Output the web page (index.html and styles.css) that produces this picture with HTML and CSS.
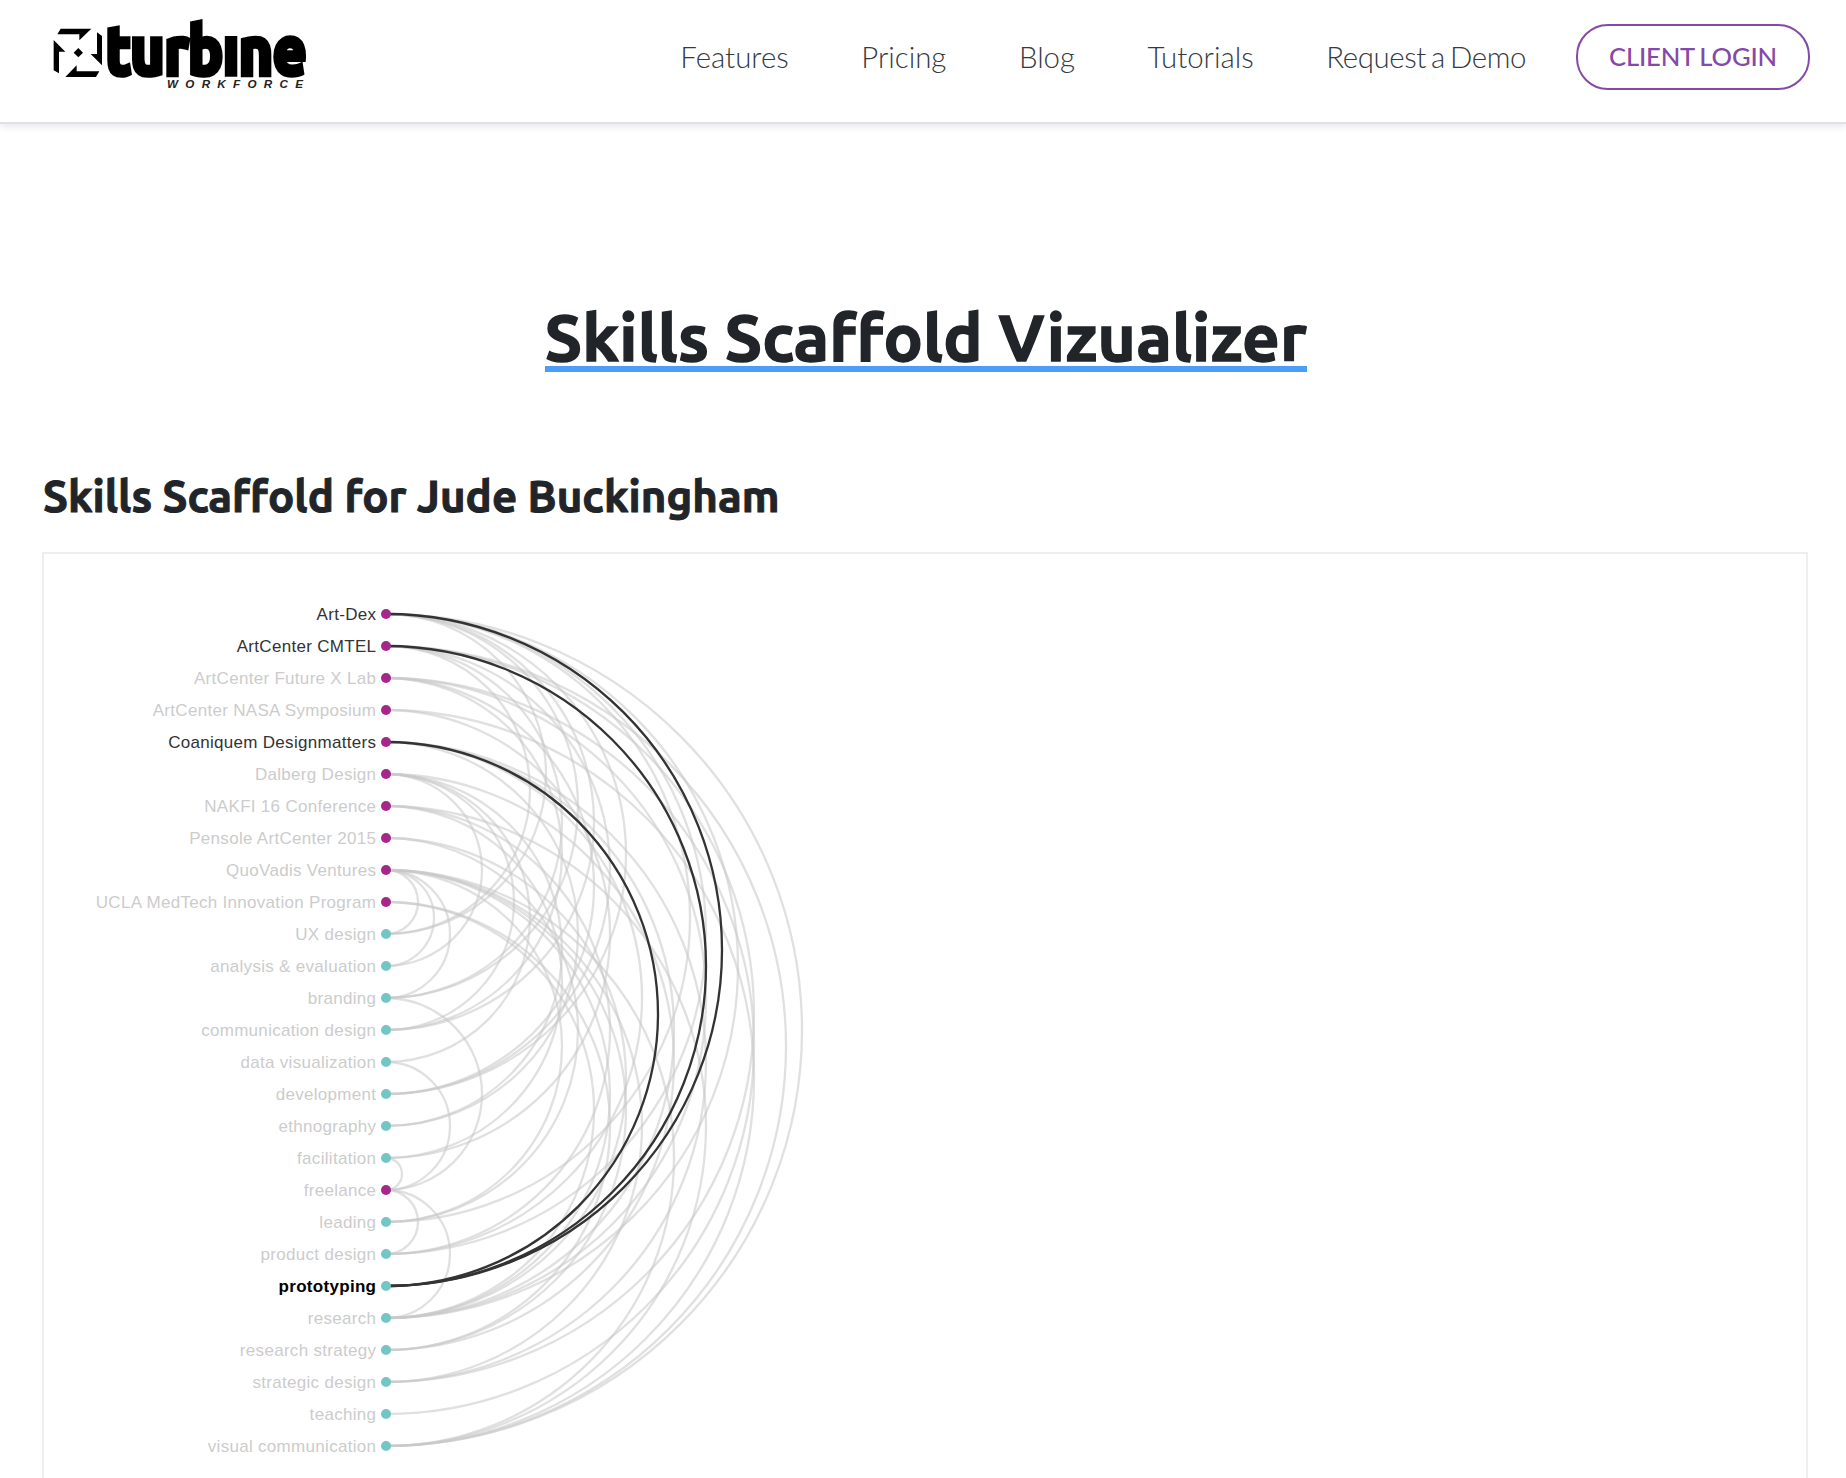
FILE: index.html
```html
<!DOCTYPE html>
<html lang="en">
<head>
<meta charset="utf-8">
<title>Skills Scaffold Vizualizer</title>
<link rel="stylesheet" href="styles.css">
</head>
<body>
<header class="topbar">
  <a class="brand" aria-label="Turbine Workforce">
    <svg class="brand-logo" viewBox="0 0 840 300">
      <path d="M62 86H154L118 121V103H52ZM171 97L186 108V196L152 162H171ZM178 214L168 231H76L110 196V214ZM41 120L76 155H57V220L41 211ZM115 144L129 158L115 172L101 158Z"/>
      <text class="brand-name" x="197" y="222" textLength="602" lengthAdjust="spacingAndGlyphs">turbıne</text>
      <text class="brand-sub" x="381" y="265" textLength="408">WORKFORCE</text>
    </svg>
  </a>
  <nav class="nav">
    <a class="nav-link">Features</a>
    <a class="nav-link">Pricing</a>
    <a class="nav-link">Blog</a>
    <a class="nav-link">Tutorials</a>
    <a class="nav-link">Request a Demo</a>
    <a class="login">CLIENT LOGIN</a>
  </nav>
</header>
<main class="page">
  <h1 class="title"><span class="title-text">Skills Scaffold Vizualizer</span></h1>
  <h2 class="subtitle">Skills Scaffold for Jude Buckingham</h2>
  <section class="chart-box">
    <svg class="chart" id="chart" width="800" height="924" viewBox="0 0 800 924"></svg>
  </section>
</main>
<script src="chart.js"></script>
</body>
</html>
```
FILE: styles.css
```css
* { box-sizing: border-box; }
body {
  margin: 0;
  background: #fff;
  color: #212529;
  font-family: Lato, sans-serif;
}
.topbar {
  height: 124px;
  display: flex;
  justify-content: space-between;
  align-items: flex-start;
  padding: 0 36px 0 40px;
  border-bottom: 2px solid #dee2e6;
  box-shadow: 0 2px 8px rgba(0, 0, 0, .11);
}
.brand-logo { display: block; width: 280px; height: 100px; overflow: visible; }
.brand-name { font: 700 199px Ubuntu, "Noto Sans", sans-serif; stroke: #000; stroke-width: 17; }
.brand-sub { font: italic bold 35px "Liberation Sans", sans-serif; fill: #222; }
.nav { display: flex; align-items: center; padding-top: 24px; }
.nav-link {
  margin-right: 72.5px;
  font-size: 29.4px;
  font-weight: 300;
  line-height: 66px;
  color: #343a40;
  white-space: nowrap;
}
.nav-link:nth-child(5) { margin-right: 50px; letter-spacing: -.4px; word-spacing: -2.4px; }
.login {
  width: 234px;
  height: 66px;
  border: 2px solid #8549a8;
  border-radius: 32px;
  color: #8549a8;
  font-size: 25.6px;
  font-weight: 500;
  line-height: 61px;
  letter-spacing: -.15px;
  word-spacing: -1.4px;
  text-align: center;
  white-space: nowrap;
}
.page { padding: 176px 38px 0 42px; font-family: Ubuntu, "Noto Sans", sans-serif; }
.title {
  margin: 0;
  height: 158px;
  padding-left: 2px;
  text-align: center;
  font-size: 65.6px;
  line-height: 74px;
  font-weight: 700;
}
.title-text {
  display: inline-block;
  height: 72px;
  border-bottom: 6px solid #4a9df8;
  letter-spacing: .22px;
  white-space: nowrap;
  -webkit-text-stroke: 1.4px #212529;
}
.subtitle {
  margin: 0;
  height: 94px;
  padding-left: 1px;
  font-size: 43.8px;
  line-height: 76px;
  font-weight: 700;
  letter-spacing: .05px;
  -webkit-text-stroke: 1px #212529;
}
.chart-box { height: 926px; border: 2px solid #eee; border-bottom: 0; }
.chart { display: block; }
.link { fill: none; stroke: #c8c8c8; stroke-opacity: .56; stroke-width: 2.3; }
.link.active { stroke: #333; stroke-opacity: 1; }
.dot { fill: #73c5c7; }
.dot.project { fill: #a3278d; }
.label { font: 17px Helvetica, "Liberation Sans", sans-serif; letter-spacing: .3px; fill: #ccc; text-anchor: end; }
.label.linked { fill: #333; }
.label.selected { fill: #000; font-weight: bold; }
```
FILE: chart.js
```js
const names = ["Art-Dex", "ArtCenter CMTEL", "ArtCenter Future X Lab", "ArtCenter NASA Symposium",
  "Coaniquem Designmatters", "Dalberg Design", "NAKFI 16 Conference", "Pensole ArtCenter 2015",
  "QuoVadis Ventures", "UCLA MedTech Innovation Program", "UX design", "analysis & evaluation",
  "branding", "communication design", "data visualization", "development", "ethnography",
  "facilitation", "freelance", "leading", "product design", "prototyping", "research",
  "research strategy", "strategic design", "teaching", "visual communication"];
const skills = {
  0: [10, 12, 13, 15, 19, 20, 21, 22, 26],
  1: [10, 12, 15, 21, 24, 26],
  2: [13, 15, 22, 25],
  3: [17, 26],
  4: [16, 20, 21, 22, 24],
  5: [11, 13, 14, 16, 23],
  6: [17, 20, 26],
  7: [19, 22],
  8: [10, 11, 12, 19, 22, 23, 24, 26],
  9: [22, 23],
  18: [12, 14, 17, 20, 22]
};
const X = 342, TOP = 60, STEP = 32, SELECTED = 21;
const svg = document.getElementById("chart");
function add(tag, attrs, text) {
  const el = document.createElementNS("http://www.w3.org/2000/svg", tag);
  for (const k in attrs) el.setAttribute(k, attrs[k]);
  if (text) el.textContent = text;
  svg.appendChild(el);
}
const y = i => TOP + STEP * i;
const links = [];
for (const p in skills) for (const s of skills[p]) links.push([Math.min(p, s), Math.max(p, s)]);
links.sort((a, b) => (a[1] === SELECTED) - (b[1] === SELECTED));
for (const [a, b] of links) {
  const r = (b - a) * STEP / 2;
  add("path", { class: b === SELECTED ? "link active" : "link", d: `M${X} ${y(a)}A${r} ${r} 0 0 1 ${X} ${y(b)}` });
}
names.forEach((name, i) => {
  const linked = (skills[i] || []).includes(SELECTED);
  add("circle", { class: i in skills ? "dot project" : "dot", cx: X, cy: y(i), r: 5 });
  add("text", { class: "label" + (i === SELECTED ? " selected" : linked ? " linked" : ""), x: X - 9.7, y: y(i) + 5.6 }, name);
});
```
